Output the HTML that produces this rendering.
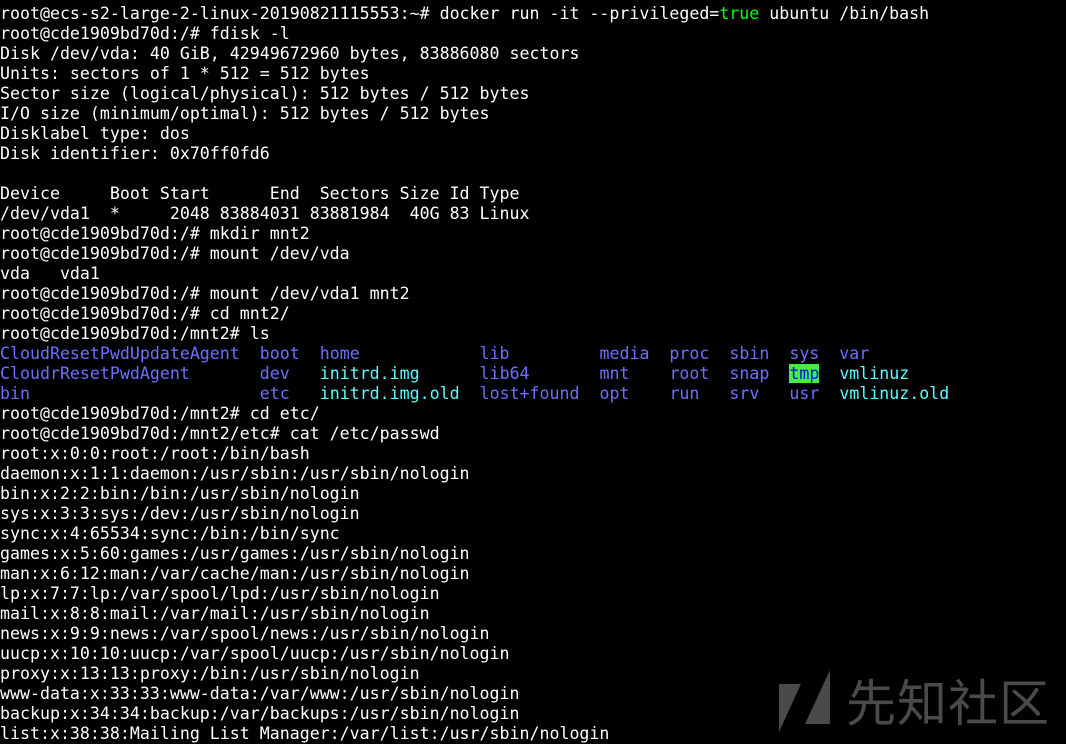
<!DOCTYPE html><html><head><meta charset="utf-8"><style>
body{margin:0;background:#000;width:1066px;height:738px;overflow:hidden;position:relative}
pre{margin:0;position:absolute;left:0px;top:4px;font-family:"DejaVu Sans Mono","Liberation Mono",monospace;font-size:16.6px;line-height:20px;color:#fff;white-space:pre}
.b{color:#6e6eff}.c{color:#5ff}.g{color:#0f0}.t{background:#4e4;color:#00f}
.wm{position:absolute;left:846px;top:670px;font-family:"Noto Sans CJK SC",sans-serif;font-size:50px;line-height:60px;color:#4a4a4a;letter-spacing:1px}
</style></head><body><pre>root@ecs-s2-large-2-linux-20190821115553:~# docker run -it --privileged=<span class="g">true</span> ubuntu /bin/bash
root@cde1909bd70d:/# fdisk -l
Disk /dev/vda: 40 GiB, 42949672960 bytes, 83886080 sectors
Units: sectors of 1 * 512 = 512 bytes
Sector size (logical/physical): 512 bytes / 512 bytes
I/O size (minimum/optimal): 512 bytes / 512 bytes
Disklabel type: dos
Disk identifier: 0x70ff0fd6

Device     Boot Start      End  Sectors Size Id Type
/dev/vda1  *     2048 83884031 83881984  40G 83 Linux
root@cde1909bd70d:/# mkdir mnt2
root@cde1909bd70d:/# mount /dev/vda
vda   vda1
root@cde1909bd70d:/# mount /dev/vda1 mnt2
root@cde1909bd70d:/# cd mnt2/
root@cde1909bd70d:/mnt2# ls
<span class="b">CloudResetPwdUpdateAgent</span>  <span class="b">boot</span>  <span class="b">home</span>            <span class="b">lib</span>         <span class="b">media</span>  <span class="b">proc</span>  <span class="b">sbin</span>  <span class="b">sys</span>  <span class="b">var</span>
<span class="b">CloudrResetPwdAgent</span>       <span class="b">dev</span>   <span class="c">initrd.img</span>      <span class="b">lib64</span>       <span class="b">mnt</span>    <span class="b">root</span>  <span class="b">snap</span>  <span class="t">tmp</span>  <span class="c">vmlinuz</span>
<span class="b">bin</span>                       <span class="b">etc</span>   <span class="c">initrd.img.old</span>  <span class="b">lost+found</span>  <span class="b">opt</span>    <span class="b">run</span>   <span class="b">srv</span>   <span class="b">usr</span>  <span class="c">vmlinuz.old</span>
root@cde1909bd70d:/mnt2# cd etc/
root@cde1909bd70d:/mnt2/etc# cat /etc/passwd
root:x:0:0:root:/root:/bin/bash
daemon:x:1:1:daemon:/usr/sbin:/usr/sbin/nologin
bin:x:2:2:bin:/bin:/usr/sbin/nologin
sys:x:3:3:sys:/dev:/usr/sbin/nologin
sync:x:4:65534:sync:/bin:/bin/sync
games:x:5:60:games:/usr/games:/usr/sbin/nologin
man:x:6:12:man:/var/cache/man:/usr/sbin/nologin
lp:x:7:7:lp:/var/spool/lpd:/usr/sbin/nologin
mail:x:8:8:mail:/var/mail:/usr/sbin/nologin
news:x:9:9:news:/var/spool/news:/usr/sbin/nologin
uucp:x:10:10:uucp:/var/spool/uucp:/usr/sbin/nologin
proxy:x:13:13:proxy:/bin:/usr/sbin/nologin
www-data:x:33:33:www-data:/var/www:/usr/sbin/nologin
backup:x:34:34:backup:/var/backups:/usr/sbin/nologin
list:x:38:38:Mailing List Manager:/var/list:/usr/sbin/nologin</pre>
<svg style="position:absolute;left:779px;top:670px" width="52" height="64"><polygon points="0,14 22,14 0,62" fill="#4a4a4a"/><polygon points="51,0 51,54 26,54" fill="#4a4a4a"/></svg>
<div class="wm">先知社区</div>
</body></html>
